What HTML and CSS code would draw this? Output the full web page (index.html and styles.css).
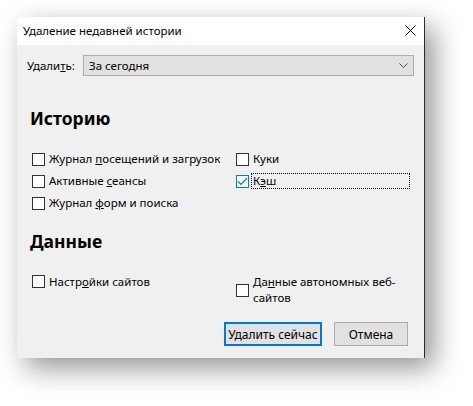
FILE: index.html
```html
<!DOCTYPE html>
<html lang="ru">
<head>
<meta charset="utf-8">
<title>Удаление недавней истории</title>
<link rel="stylesheet" href="styles.css">
</head>
<body>
<div class="page">
  <div class="dialog">
    <div class="titlebar">
      <span class="title">Удаление недавней истории</span>
      <svg class="close" width="11" height="11" viewBox="0 0 11 11"><path d="M0.5 0.5 L10.5 10.5 M10.5 0.5 L0.5 10.5" stroke="#000" stroke-width="1" fill="none"/></svg>
    </div>
    <div class="content">
      <div class="range-row">
        <span class="range-label">Удали<u>т</u>ь:</span>
        <div class="select">
          <span class="select-value">За сегодня</span>
          <svg class="chevron" width="9" height="5" viewBox="0 0 9 5"><path d="M0.5 0.5 L4.5 4.5 L8.5 0.5" stroke="#444" stroke-width="1" fill="none"/></svg>
        </div>
      </div>

      <h2 class="section first">Историю</h2>
      <div class="grid history">
        <div class="item"><span class="box"></span><span class="label">Журнал <u>п</u>осещений и загрузок</span></div>
        <div class="item"><span class="box"></span><span class="label">Куки</span></div>
        <div class="item"><span class="box"></span><span class="label">Активные <u>с</u>еансы</span></div>
        <div class="item"><span class="box checked"><svg width="11" height="11" viewBox="0 0 11 11"><path d="M1 5.5 L4 8.5 L10 2" stroke="#0078d7" stroke-width="1.2" fill="none"/></svg></span><span class="label focused">К<u>э</u>ш</span></div>
        <div class="item"><span class="box"></span><span class="label">Журнал <u>ф</u>орм и поиска</span></div>
      </div>

      <h2 class="section second">Данные</h2>
      <div class="grid data">
        <div class="item top"><span class="box"></span><span class="label">Настр<u>о</u>йки сайтов</span></div>
        <div class="item wrap"><span class="box"></span><span class="label">Да<u>н</u>ные автономных веб-сайтов</span></div>
      </div>

      <div class="buttons">
        <button class="btn default">Удалить сейчас</button>
        <button class="btn cancel">Отмена</button>
      </div>
    </div>
  </div>
</div>
</body>
</html>
```
FILE: styles.css
```css
html, body {
  margin: 0;
  padding: 0;
  background: #ffffff;
}

body {
  font-family: "Noto Sans", "Liberation Sans", sans-serif;
  font-size: 11.5px;
  color: #000;
}

.page {
  padding: 17px 0 0 17px;
  height: 406px;
  box-sizing: border-box;
  overflow: hidden;
}

.dialog {
  width: 408px;
  height: 341px;
  box-sizing: border-box;
  background: #f0f0f0;
  border-right: 1px solid #2b2b2b;
  box-shadow: 9px 10px 26px rgba(0, 0, 0, 0.42);
  display: flex;
  flex-direction: column;
}

.titlebar {
  height: 28px;
  background: #ffffff;
  display: flex;
  align-items: center;
  justify-content: space-between;
  padding: 0 8px 0 6px;
  flex: none;
}

.title {
  line-height: 16px;
}

.close {
  display: block;
  margin-top: -1px;
}

.content {
  flex: 1;
  display: flex;
  flex-direction: column;
  padding: 10px 10px 12px 10px;
}

.range-row {
  display: flex;
  align-items: center;
  height: 21px;
}

.range-label {
  width: 56px;
  flex: none;
}

.select {
  flex: 1;
  height: 21px;
  box-sizing: border-box;
  background: #e1e1e1;
  border: 1px solid #adadad;
  display: flex;
  align-items: center;
  justify-content: space-between;
  padding: 0 5px 0 5px;
}

.chevron {
  display: block;
}

.section {
  font-size: 17.5px;
  font-weight: bold;
  line-height: 20px;
  margin: 0 0 0 3px;
}

.section.first {
  margin-top: 32px;
}

.section.second {
  margin-top: 17px;
}

.grid {
  display: grid;
  grid-template-columns: 204px 174px;
  margin-left: 5px;
}

.history {
  margin-top: 20px;
  grid-auto-rows: 22px;
}

.data {
  margin-top: 23px;
}

.item {
  display: flex;
  align-items: center;
}

.item.top {
  align-items: flex-start;
}

.item.top .box {
  margin-top: 1px;
}

.box {
  width: 13px;
  height: 13px;
  box-sizing: border-box;
  border: 1px solid #333333;
  background: #ffffff;
  flex: none;
  margin-right: 2px;
  display: flex;
  align-items: center;
  justify-content: center;
}

.box.checked {
  border-color: #0078d7;
}

.box svg {
  display: block;
}

.label {
  line-height: 14px;
  padding: 0 1px;
  border: 1px solid transparent;
}

.label.focused {
  flex: 1;
  border: 1px dotted #000;
}

.data .label {
  line-height: 16px;
  border-top: 0;
  border-bottom: 0;
}

.wrap .label {
  flex: 1;
}

.buttons {
  margin-top: auto;
  display: flex;
  justify-content: flex-end;
  gap: 12px;
  padding-right: 6px;
}

.btn {
  font-family: inherit;
  font-size: 12px;
  color: #000;
  height: 24px;
  box-sizing: border-box;
  background: #e1e1e1;
  border: 1px solid #adadad;
  padding: 0;
  margin: 0;
}

.btn.default {
  width: 98px;
  border: 2px solid #0078d7;
}

.btn.cancel {
  width: 74px;
}
```
